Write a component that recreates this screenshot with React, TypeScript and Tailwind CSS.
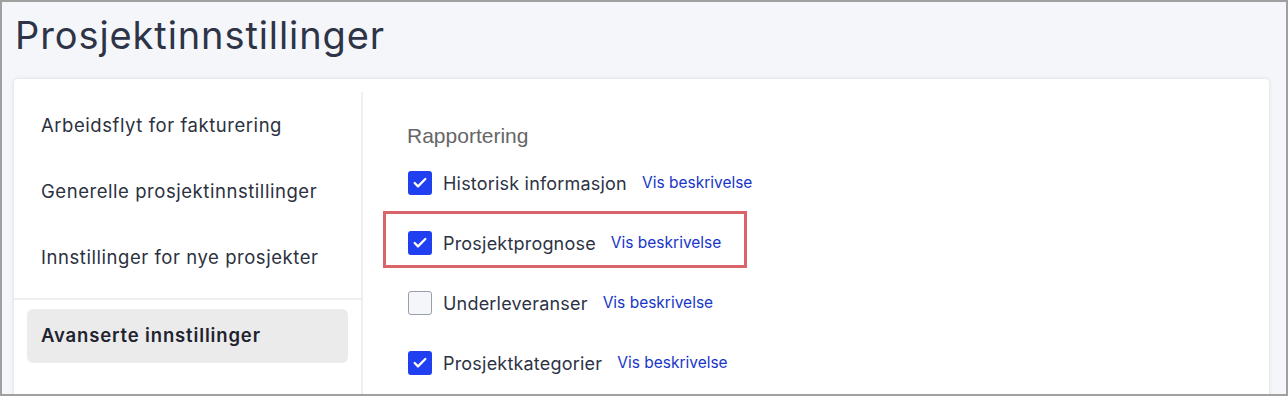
import { Check } from 'lucide-react'

const menu = [
  'Arbeidsflyt for fakturering',
  'Generelle prosjektinnstillinger',
  'Innstillinger for nye prosjekter',
]

const options = [
  { label: 'Historisk informasjon', checked: true, marked: false },
  { label: 'Prosjektprognose', checked: true, marked: true },
  { label: 'Underleveranser', checked: false, marked: false },
  { label: 'Prosjektkategorier', checked: true, marked: false },
]

function Checkbox({ checked }: { checked: boolean }) {
  return checked ? (
    <span className="w-[24px] h-[24px] rounded-[3px] bg-[#1f3ff0] flex items-center justify-center shrink-0">
      <Check size={16} strokeWidth={3.4} className="text-white" />
    </span>
  ) : (
    <span className="w-[24px] h-[24px] rounded-[3px] border border-[#9a9fab] bg-[#f5f6fa] shrink-0" />
  )
}

export default function App() {
  return (
    <div className="w-[1288px] h-[396px] border-2 border-[#a0a0a0] bg-[#f5f6fa] overflow-hidden font-['Inter',sans-serif]">
      {/* Page title */}
      <h1 className="h-[77px] pl-[13px] pt-[9px] text-[38px] leading-[48px] text-[#2e3447] tracking-[0.9px]">
        Prosjektinnstillinger
      </h1>

      {/* Settings card */}
      <div className="ml-[12px] w-[1255px] h-[400px] bg-white rounded-t-[4px] shadow-[0_0_4px_rgba(0,0,0,0.12)] pt-[13px] flex">
        {/* Sidebar */}
        <div className="w-[349px] border-r-2 border-[#efefef] shrink-0">
          <div className="pt-[1px] pb-[7px] border-b-2 border-[#eeeeee] -mr-[2px]">
            {menu.map((item) => (
              <div key={item} className="h-[66px] flex items-center pl-[27px] text-[18.5px] tracking-[0.55px] text-[#2b3140]">
                {item}
              </div>
            ))}
          </div>
          <div className="pt-[9px] px-[13px]">
            <div className="h-[54px] rounded-[6px] bg-[#ebebeb] flex items-center pl-[14px] text-[18.5px] tracking-[0.85px] font-semibold text-[#1f2330]">
              Avanserte innstillinger
            </div>
          </div>
        </div>

        {/* Content */}
        <div className="flex-1 pl-[44px] pt-[29px]">
          <div className="text-[21px] leading-[30px] text-[#666666] font-['Liberation_Sans',sans-serif]">
            Rapportering
          </div>
          <div className="pt-[2px]">
            {options.map((o) => (
              <div key={o.label} className="relative h-[60px] flex items-center pl-[1px]">
                {o.marked && (
                  <div className="absolute left-[-24px] top-[-2px] w-[364px] h-[57px] border-[3px] border-[#d9656a]" />
                )}
                <Checkbox checked={o.checked} />
                <span className="ml-[11px] text-[18px] tracking-[0.2px] text-[#2d3344]">{o.label}</span>
                <span className="ml-[15px] text-[15.5px] text-[#1736c8]">Vis beskrivelse</span>
              </div>
            ))}
          </div>
        </div>
      </div>
    </div>
  )
}
